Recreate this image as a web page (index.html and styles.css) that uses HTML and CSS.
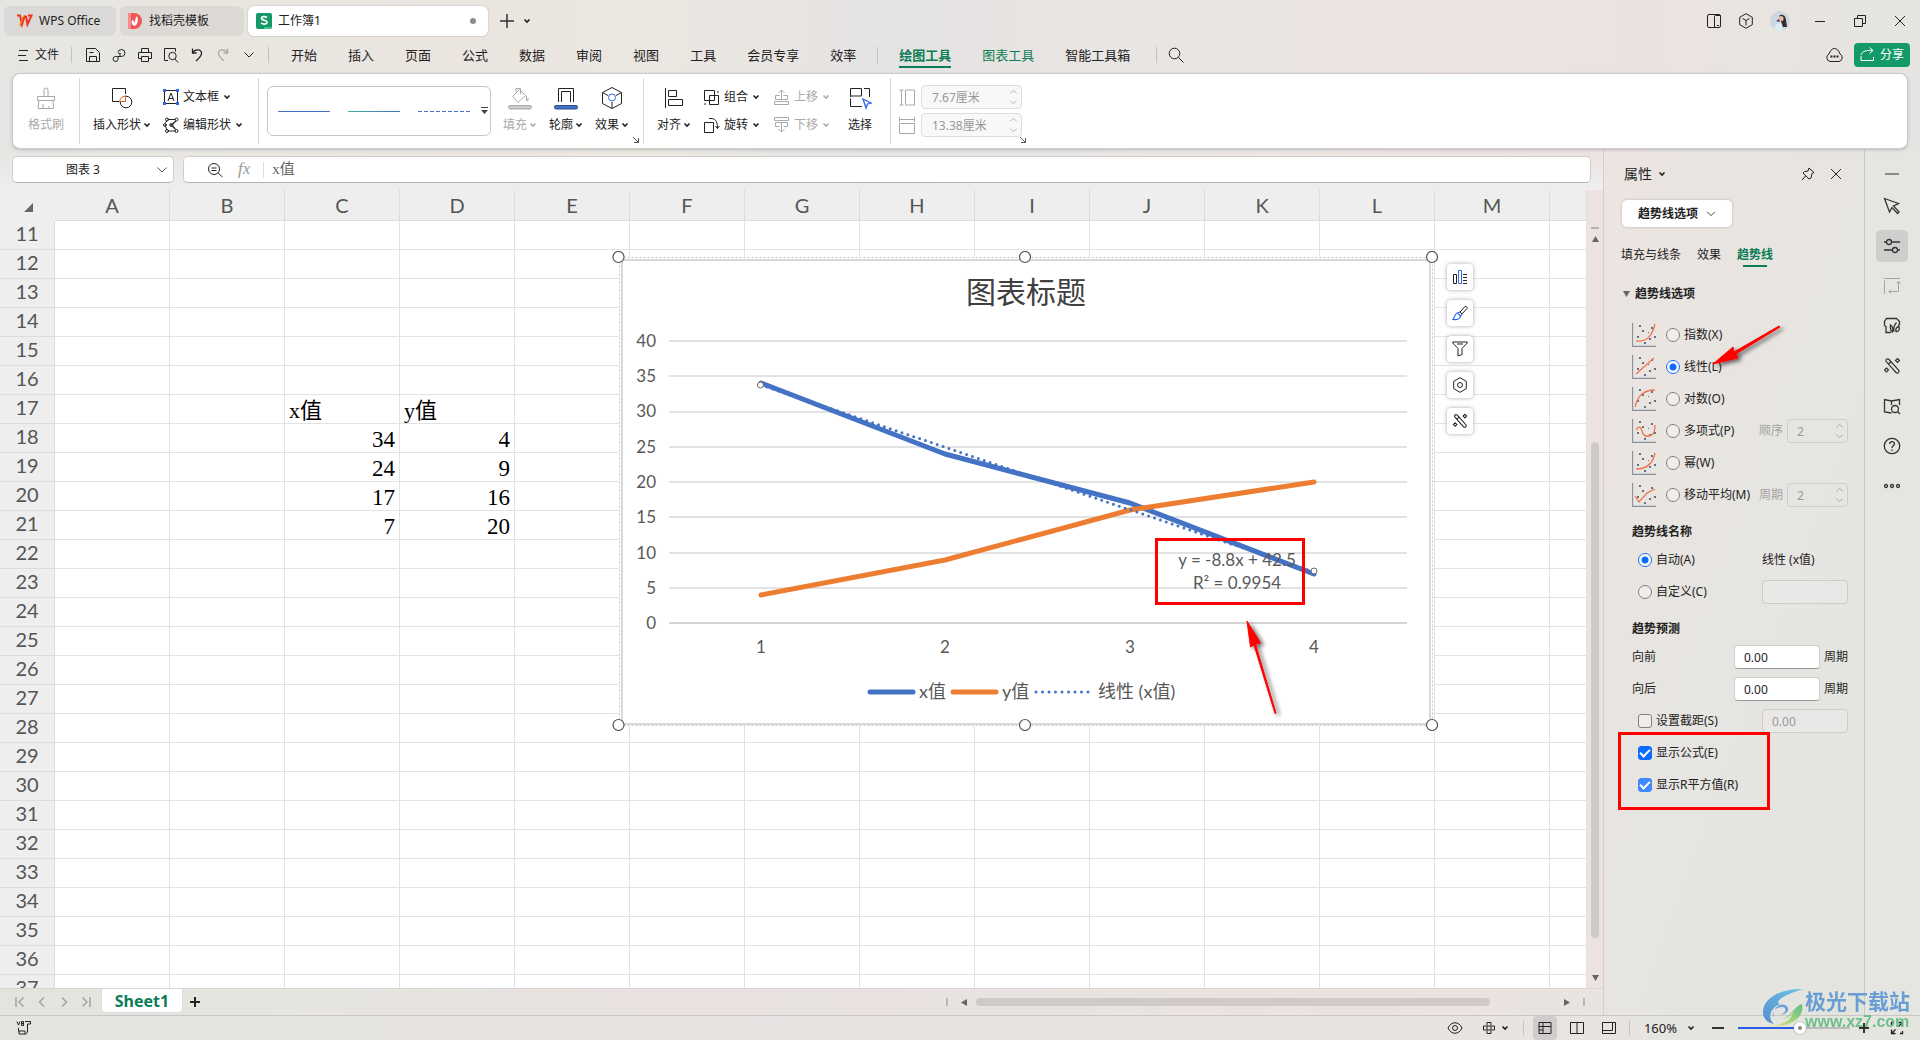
FILE: index.html
```html
<!DOCTYPE html>
<html lang="zh-CN">
<head>
<meta charset="utf-8">
<title>工作簿1 - WPS Office</title>
<link rel="stylesheet" href="styles.css">
</head>
<body>
<svg class="defs" width="0" height="0" aria-hidden="true">
  <symbol id="caret" viewBox="0 0 8 8"><path d="M1.500 2.500 4 5l2.500-2.500" fill="none" stroke="currentColor" stroke-width="1.600"/></symbol>
  <symbol id="chev" viewBox="0 0 12 12"><path d="M1.500 3.500 6 8l4.500-4.500" fill="none" stroke="currentColor"/></symbol>
  <symbol id="updown" viewBox="0 0 10 20"><path d="M1.500 6 5 2.500 8.500 6M1.500 14 5 17.500 8.500 14" fill="none" stroke="currentColor"/></symbol>
  <symbol id="close" viewBox="0 0 12 12"><path d="m1 1 10 10M11 1 1 11" fill="none" stroke="currentColor"/></symbol>
  <symbol id="launch" viewBox="0 0 8 8"><path d="m1 1 5 5M6.500 2v4.500H2" fill="none" stroke="currentColor"/></symbol>
  <symbol id="wand" viewBox="0 0 18 18"><g fill="none" stroke="currentColor" stroke-width="1.200"><path d="M3.300 4.700 13 15.500a1.700 1.700 0 0 0 2.600-2.300L6 2.500a1.700 1.700 0 0 0-2.700 2.200zM5.500 7 8 4.700"/><path d="m14.500 1.500 2 2-2 2-2-2zM3.500 11l2 2-2 2-2-2z"/></g></symbol>
</svg>

<header class="titlebar">
  <div class="tabs">
    <button class="tab tab-home"><svg width="17" height="14" viewBox="0 0 17 14"><path d="M1 1.500h3l2 9 2.500-8h1.500l1.500 8L15.500 1.500H12" fill="none" stroke="#f0321e" stroke-width="2"/><path d="m4 12 3-9" stroke="#ff7a1a" stroke-width="1.500"/></svg>WPS Office</button>
    <button class="tab tab-docer"><svg width="14" height="16" viewBox="0 0 14 16"><path d="M0 0h6a8 8 0 0 1 0 16H0z" fill="#f25555"/><path d="M0 0h3v16H0z" fill="#f78d8d"/><path d="M7 13C3 12 3.500 9 4 7c1.500.5 2.500 1.500 3 3 0-2 0-5 2-7 1 2 2 7-2 10z" fill="#fff"/></svg>找稻壳模板</button>
    <button class="tab tab-book"><svg width="16" height="16" viewBox="0 0 16 16"><rect width="16" height="16" rx="2" fill="#159868"/><path d="M8 14h8v1a1 1 0 0 1-1 1H8z" fill="#3fc48c"/><path d="M11 4.500C9 3 5.500 3.300 5.500 5.300c0 2.600 5.500 1.300 5.500 4 0 2-3.500 2.300-6 .7" fill="none" stroke="#fff" stroke-width="1.700"/></svg>工作簿1<i class="dot"></i></button>
    <button class="plain add" aria-label="新建"><svg width="14" height="14"><path d="M7 0v14M0 7h14" stroke="#333" stroke-width="1.500"/></svg></button>
    <button class="plain" aria-label="标签列表"><svg width="8" height="8"><use href="#caret"/></svg></button>
  </div>
  <div class="win">
    <button class="plain" aria-label="侧栏"><svg width="16" height="16" class="ln"><rect x="1.500" y="1.500" width="13" height="13" rx="1.500"/><path d="M8.500 14.500v-11a1 1 0 0 1 1-1h5M11 12.500h2"/></svg></button>
    <button class="plain" aria-label="工具"><svg width="16" height="16" class="ln"><path d="m8 .7 6.300 3.600v7.400L8 15.300 1.700 11.700V4.300zM4.500 5.500 8 7.500l3.500-2M8 7.500v5"/></svg></button>
    <button class="plain" aria-label="账号"><svg width="20" height="20"><defs><clipPath id="av"><circle cx="10" cy="10" r="10"/></clipPath></defs><g clip-path="url(#av)"><rect width="20" height="20" fill="#cbd8e2"/><path d="M9 5c3-3 7 0 7 4l1 7h-4z" fill="#3a2a30"/><circle cx="11" cy="7.500" r="2.600" fill="#e3b8a8"/><path d="M4 20c0-6 3-8 7-8l2 8z" fill="#dcecf5"/><path d="M6 10l3-2 1 3z" fill="#54424a"/></g></svg></button>
    <button class="plain" aria-label="最小化"><svg width="12" height="12" class="ln"><path d="M1 6.500h10"/></svg></button>
    <button class="plain" aria-label="还原"><svg width="14" height="14" class="ln"><path d="M1.500 4.500h8v8h-8zM4.500 4V1.500h8v8H10"/></svg></button>
    <button class="plain" aria-label="关闭"><svg width="12" height="12"><use href="#close"/></svg></button>
  </div>
</header>

<nav class="menubar">
  <button class="plain file"><svg width="10" height="12" class="ln"><path d="M1 1.500h9M0 6.500h8M1 11.500h9"/></svg>文件</button>
  <i class="vline"></i>
  <div class="quick">
    <button class="plain" aria-label="保存"><svg width="16" height="16" class="ln"><path d="M1.500 1.500h9l4 4v9h-13zM4.500 14.500v-5h7v5M4.500 5.500h4"/></svg></button>
    <button class="plain" aria-label="输出"><svg width="16" height="16" class="ln"><path d="M6.500 9.500h4a3.500 3.500 0 1 0-3.500-4M7.500 6.500h2M9 6v3.500M6.500 9.500H4.500a2.500 2.500 0 1 0 2.500 3V9.500"/></svg></button>
    <button class="plain" aria-label="打印"><svg width="16" height="16" class="ln"><path d="M4.500 5V1.500h7V5M4 11.500H1.500v-6h13v6H12M4.500 9.500h7v5h-7z"/></svg></button>
    <button class="plain" aria-label="打印预览"><svg width="16" height="16" class="ln"><path d="M5 13.500H1.500v-12h11v3"/><circle cx="9.500" cy="9" r="3.700"/><path d="m12 12 3 3.500"/></svg></button>
    <button class="plain" aria-label="撤销"><svg width="16" height="16" class="ln"><path d="M3.500 1.500v4.500h4M3.500 6C6 1.500 13 2 12.500 6.500c-.2 3-3 5-5.500 7.500" stroke-width="1.300"/></svg></button>
    <button class="plain off" aria-label="恢复"><svg width="16" height="16" class="ln"><path d="M12.500 1.500v4.500h-4M12.500 6C10 1.500 3 2 3.500 6.500c.2 3 3 5 5.500 7.500" stroke-width="1.300"/></svg></button>
    <button class="plain" aria-label="更多"><svg width="12" height="12"><use href="#chev"/></svg></button>
  </div>
  <i class="vline"></i>
  <div class="menus">
    <button class="plain">开始</button><button class="plain">插入</button><button class="plain">页面</button><button class="plain">公式</button><button class="plain">数据</button><button class="plain">审阅</button><button class="plain">视图</button><button class="plain">工具</button><button class="plain">会员专享</button><button class="plain">效率</button>
  </div>
  <i class="vline"></i>
  <div class="menus ctx">
    <button class="plain active">绘图工具</button><button class="plain green">图表工具</button><button class="plain">智能工具箱</button>
  </div>
  <i class="vline"></i>
  <button class="plain search" aria-label="搜索"><svg width="16" height="16" class="ln"><circle cx="6.500" cy="6.500" r="5.300"/><path d="m10.500 10.500 5 5"/></svg></button>
  <div class="share-box">
    <button class="plain" aria-label="云端状态"><svg width="17" height="16" class="ln"><path d="M4 14.500a4 4 0 0 1-1-7.500c1-3 3-5.500 5.500-5.500S13 4 14 7a4 4 0 0 1-1 7.500z"/><path d="M4.500 9.500h2m1 0h2m1 0h2" stroke-width="1.800"/></svg></button>
    <button class="share"><svg width="15" height="15" class="ln"><path d="M1 9v4.500h12.500V10M1 8c1-4 6-5 11.500-4.500M9.500.5l3.500 3-3.500 3"/></svg>分享</button>
  </div>
</nav>

<section class="ribbon">
  <div class="rgroup g-brush">
    <button class="big off"><svg width="24" height="26" class="ln"><path d="M3.500 11.500h17v4h-17zM5 15.500l-1 8h15.500l-.5-8M10 11.500V5a2 2 0 1 1 4 0v6.500M9 23v-4M15 23v-2"/></svg><span>格式刷</span></button>
  </div>
  <div class="rgroup g-insert">
    <button class="big"><svg width="24" height="26" class="ln"><path d="M9 16.500H2.500v-13h13V9"/><circle cx="16" cy="17" r="5.800"/><path d="M9.700 16.500A6.500 6 0 0 1 15.500 11v5.500z" stroke="#d9602b" fill="#fff"/></svg><span>插入形状<svg width="8" height="8"><use href="#caret"/></svg></span></button>
    <div class="stack">
      <button class="small"><svg width="16" height="16" class="ln"><path d="M1.500 3v10M14.500 3v10M3 1.500h10M3 14.500h10M5 12l3-8 3 8M6 9.500h4"/><path d="M0 0h3v3H0zM13 0h3v3h-3zM0 13h3v3H0zM13 13h3v3h-3z" fill="#2f66e8" stroke="none"/></svg>文本框<svg width="8" height="8"><use href="#caret"/></svg></button>
      <button class="small"><svg width="16" height="16" class="ln"><path d="M4.500 2.500h8M2 6.500 4 3.500M4 7.500l-2 .5 2 5M4.500 14h8M13 4 9.500 8l3.500 5M12 4.500 7.500 8 12 12"/><circle cx="4" cy="2.500" r="1.500"/><circle cx="13.500" cy="2.500" r="1.500"/><circle cx="1.800" cy="8" r="1.300"/><circle cx="8" cy="8" r="1.300"/><circle cx="4" cy="14" r="1.500"/><circle cx="13.500" cy="14" r="1.500"/></svg>编辑形状<svg width="8" height="8"><use href="#caret"/></svg></button>
    </div>
  </div>
  <div class="rgroup g-style">
    <div class="gallery">
      <button class="plain line-a" aria-label="线条样式1"></button><button class="plain line-b" aria-label="线条样式2"></button><button class="plain line-c" aria-label="线条样式3"></button>
      <button class="plain more" aria-label="更多样式"><svg width="8" height="8"><path d="M0 .5h7" stroke="#444"/><path d="M0 3h7L3.500 7z" fill="#444"/></svg></button>
    </div>
    <button class="big off"><svg width="26" height="26" class="ln"><path d="m6 11 6.500-6.500 6 6L11 17.500 6 12zM9 7V3.500h4.500V9M19.500 11v4.500h1.500V13"/><rect x="1.500" y="20.500" width="23" height="3.500" rx="1.500" fill="#ccc"/></svg><span>填充<svg width="8" height="8"><use href="#caret"/></svg></span></button>
    <button class="big"><svg width="26" height="26" class="ln"><path d="M5.500 17V3.500h15V17M8.500 17V6.500h9V17"/><rect x="1.500" y="20.500" width="23" height="3.500" rx="1.500" fill="#4472c4" stroke="#2b4f94"/></svg><span>轮廓<svg width="8" height="8"><use href="#caret"/></svg></span></button>
    <button class="big"><svg width="24" height="26" class="ln"><path d="m12 2.500 9.500 5v11L12 23.500l-9.500-5v-11zM12 17v6.500M2.500 7.500 8 10.500M21.500 7.500 16 10.500"/><circle cx="12" cy="12.500" r="3.500" stroke="#2f66e8"/></svg><span>效果<svg width="8" height="8"><use href="#caret"/></svg></span></button>
    <button class="plain launcher" aria-label="样式设置"><svg width="8" height="8"><use href="#launch"/></svg></button>
  </div>
  <div class="rgroup g-arrange">
    <button class="big"><svg width="22" height="26" class="ln"><path d="M2.500 3v20M5.500 5.500h8v6h-8zM5.500 14.500h14v6h-14z"/></svg><span>对齐<svg width="8" height="8"><use href="#caret"/></svg></span></button>
    <div class="stack">
      <button class="small"><svg width="17" height="17" class="ln"><path d="M1.500 1.500h10v10h-10zM6.500 6.500h9v9h-9zM14 3h2M1 15h2"/></svg>组合<svg width="8" height="8"><use href="#caret"/></svg></button>
      <button class="small"><svg width="17" height="17" class="ln"><path d="M1.500 5.500h9v10h-9zM6 1.500c6-.5 8.500 2 8.500 10M12.500 9l2 2.500 2-2.500"/></svg>旋转<svg width="8" height="8"><use href="#caret"/></svg></button>
    </div>
    <div class="stack">
      <button class="small off"><svg width="16" height="16" class="ln"><path d="M7.500 10V1M4.500 4l3-3 3 3M5.500 6.500h-4v4h12v-4h-4M.5 12.500h14v3H.5z"/></svg>上移<svg width="8" height="8"><use href="#caret"/></svg></button>
      <button class="small off"><svg width="16" height="16" class="ln"><path d="M7.500 6v9M4.500 12l3 3 3-3M5.500 9.500h-4v-4h12v4h-4M.5.500h14v3H.5z"/></svg>下移<svg width="8" height="8"><use href="#caret"/></svg></button>
    </div>
    <button class="big"><svg width="24" height="26" class="ln"><path d="M2.500 12V3.500h11V11H2.500M16 3.500h5.500V12M2.500 13.500v8H14"/><path d="m15 14 8 4-3.500 1-1.500 4z" stroke="#2f66e8" stroke-width="1.300"/></svg><span>选择</span></button>
  </div>
  <div class="rgroup g-size">
    <div class="stack">
      <label class="dim"><svg width="16" height="17" class="ln"><path d="M2.500 1v15M.500 1h4M.500 16h4M6.500 1h9v15h-9z"/></svg><span class="num"><input value="7.67厘米" aria-label="高度" disabled><svg width="9" height="18"><use href="#updown"/></svg></span></label>
      <label class="dim"><svg width="16" height="17" class="ln"><path d="M0 2.500h16M.500 0v5M15.500 0v5M.500 6.500h15v10H.500z"/></svg><span class="num"><input value="13.38厘米" aria-label="宽度" disabled><svg width="9" height="18"><use href="#updown"/></svg></span></label>
    </div>
    <button class="plain launcher" aria-label="大小设置"><svg width="8" height="8"><use href="#launch"/></svg></button>
  </div>
</section>

<div class="body">
<main class="work">
  <div class="formula-row">
    <div class="namebox"><select aria-label="名称框"><option>图表 3</option></select><svg width="12" height="12"><use href="#chev"/></svg></div>
    <div class="formula">
      <svg width="16" height="16" class="ln"><circle cx="7" cy="7" r="5.500"/><path d="m11 11 4.500 4M4.500 6h5M4.500 8.500h5"/></svg>
      <span class="fx">fx</span>
      <input value="x值" aria-label="编辑栏">
    </div>
  </div>
  <div class="canvas">
    <div class="sheet">
      <table>
        <colgroup><col class="c0"><col class="c"><col class="c"><col class="c"><col class="c"><col class="c"><col class="c"><col class="c"><col class="c"><col class="c"><col class="c"><col class="c"><col class="c"><col class="c"><col></colgroup>
        <thead><tr><th><svg width="9" height="9"><path d="M0 9 9 0v9z" fill="#666"/></svg></th><th>A</th><th>B</th><th>C</th><th>D</th><th>E</th><th>F</th><th>G</th><th>H</th><th>I</th><th>J</th><th>K</th><th>L</th><th>M</th><th></th></tr></thead>
        <tbody>
        <tr><th>11<td><td><td><td><td><td><td><td><td><td><td><td><td><td>
        <tr><th>12<td><td><td><td><td><td><td><td><td><td><td><td><td><td>
        <tr><th>13<td><td><td><td><td><td><td><td><td><td><td><td><td><td>
        <tr><th>14<td><td><td><td><td><td><td><td><td><td><td><td><td><td>
        <tr><th>15<td><td><td><td><td><td><td><td><td><td><td><td><td><td>
        <tr><th>16<td><td><td><td><td><td><td><td><td><td><td><td><td><td>
        <tr><th>17<td><td><td class="txt">x值<td class="txt">y值<td><td><td><td><td><td><td><td><td><td>
        <tr><th>18<td><td><td>34<td>4<td><td><td><td><td><td><td><td><td><td>
        <tr><th>19<td><td><td>24<td>9<td><td><td><td><td><td><td><td><td><td>
        <tr><th>20<td><td><td>17<td>16<td><td><td><td><td><td><td><td><td><td>
        <tr><th>21<td><td><td>7<td>20<td><td><td><td><td><td><td><td><td><td>
        <tr><th>22<td><td><td><td><td><td><td><td><td><td><td><td><td><td>
        <tr><th>23<td><td><td><td><td><td><td><td><td><td><td><td><td><td>
        <tr><th>24<td><td><td><td><td><td><td><td><td><td><td><td><td><td>
        <tr><th>25<td><td><td><td><td><td><td><td><td><td><td><td><td><td>
        <tr><th>26<td><td><td><td><td><td><td><td><td><td><td><td><td><td>
        <tr><th>27<td><td><td><td><td><td><td><td><td><td><td><td><td><td>
        <tr><th>28<td><td><td><td><td><td><td><td><td><td><td><td><td><td>
        <tr><th>29<td><td><td><td><td><td><td><td><td><td><td><td><td><td>
        <tr><th>30<td><td><td><td><td><td><td><td><td><td><td><td><td><td>
        <tr><th>31<td><td><td><td><td><td><td><td><td><td><td><td><td><td>
        <tr><th>32<td><td><td><td><td><td><td><td><td><td><td><td><td><td>
        <tr><th>33<td><td><td><td><td><td><td><td><td><td><td><td><td><td>
        <tr><th>34<td><td><td><td><td><td><td><td><td><td><td><td><td><td>
        <tr><th>35<td><td><td><td><td><td><td><td><td><td><td><td><td><td>
        <tr><th>36<td><td><td><td><td><td><td><td><td><td><td><td><td><td>
        <tr><th>37<td><td><td><td><td><td><td><td><td><td><td><td><td><td>
        </tbody>
      </table>
      <svg class="chart" width="826" height="480" viewBox="612 252 826 480" role="img" aria-label="图表标题">
        <defs><filter id="sh" x="-50%" y="-50%" width="200%" height="200%"><feDropShadow dx="3" dy="2" stdDeviation="2" flood-color="#000" flood-opacity=".6"/></filter></defs>
        <rect x="619" y="258" width="814" height="469" fill="#fff"/>
        <rect x="619.500" y="258.500" width="813" height="468" fill="none" stroke="#c9c9c9" stroke-dasharray="2 2"/>
        <rect x="622" y="261" width="808" height="464" fill="#fff" stroke="#d9d9d9" stroke-width="2"/>
        <text class="ctitle" x="1026" y="304" text-anchor="middle">图表标题</text>
        <path d="M669 342h738M669 377h738M669 413h738M669 448h738M669 483h738M669 518h738M669 554h738M669 589h738" stroke="#e2e2e2" stroke-width="2"/>
        <path d="M669 624h738" stroke="#d5d5d5" stroke-width="2"/>
        <g text-anchor="end"><text x="656" y="348">40</text><text x="656" y="383">35</text><text x="656" y="418">30</text><text x="656" y="454">25</text><text x="656" y="489">20</text><text x="656" y="524">15</text><text x="656" y="560">10</text><text x="656" y="595">5</text><text x="656" y="630">0</text></g>
        <g text-anchor="middle"><text x="761" y="654">1</text><text x="945" y="654">2</text><text x="1130" y="654">3</text><text x="1314" y="654">4</text></g>
        <g fill="none" stroke-width="5" stroke-linecap="round" stroke-linejoin="round">
          <path d="m761 384 184 71 185 49 184 71" stroke="#4472c4"/>
          <path d="m761 596 184-35 185-50 184-28" stroke="#ed7d31"/>
          <path d="m761 386 553 187" stroke="#4472c4" stroke-width="3" stroke-dasharray="0 6.200"/>
          <path d="M870 693h43" stroke="#4472c4"/><path d="M953 693h43" stroke="#ed7d31"/>
          <path d="M1036 693h54" stroke="#4472c4" stroke-width="3" stroke-dasharray="0 6.500"/>
        </g>
        <g fill="#fff" stroke="#666"><circle cx="760.500" cy="386" r="3"/><circle cx="1314" cy="572" r="3"/></g>
        <text class="leg" x="919" y="699">x值</text><text class="leg" x="1002" y="699">y值</text><text class="leg" x="1098" y="699">线性 (x值)</text>
        <g text-anchor="middle"><text x="1237" y="567">y = -8.8x + 42.5</text><text x="1237" y="590">R² = 0.9954</text></g>
        <g fill="#fff" stroke="#555" stroke-width="1.200"><circle cx="618.500" cy="258" r="5.500"/><circle cx="1025" cy="258" r="5.500"/><circle cx="1432" cy="258" r="5.500"/><circle cx="618.500" cy="726" r="5.500"/><circle cx="1025" cy="726" r="5.500"/><circle cx="1432" cy="726" r="5.500"/></g>
        <rect x="1156.500" y="540.500" width="147" height="64" fill="none" stroke="#f00" stroke-width="3"/>
        <path d="M1247 622l13.500 22-5 1 20.500 69-1 .5-21-68.500-3.500 2z" fill="#f00" stroke="#f00" stroke-linejoin="round" filter="url(#sh)"/>
      </svg>
      <div class="chart-tools">
        <button aria-label="图表元素"><svg width="16" height="16" class="ln"><path d="M1.500 5.500h3v9h-3zM11 5.500h4M11 8.500h4M11 11.500h4M11 14.500h4"/><path d="M6.500 1.500h3v13h-3z" stroke="#2f66e8"/></svg></button>
        <button aria-label="图表样式"><svg width="16" height="16" class="ln"><path d="m8 7 5-5.500a1.500 1.500 0 0 1 2 2L10 9z"/><path d="M8 7 5.500 8 8.500 11l1.500-2M5.500 8c-3 .5-2.500 4-4.500 6.500 4 .5 7-.5 7.500-3.500" stroke="#2f66e8" stroke-width="1.200"/></svg></button>
        <button aria-label="图表筛选器"><svg width="16" height="16" class="ln"><path d="M.800 1h14.400v1L10 7.500v6L6 15V7.500L.800 2zM5 3h6"/></svg></button>
        <button aria-label="设置"><svg width="16" height="16" class="ln"><path d="m8 .7 6.300 3.600v7.400L8 15.300 1.700 11.700V4.300z"/><circle cx="8" cy="8" r="2.500"/></svg></button>
        <button aria-label="智能图表"><svg width="16" height="16"><use href="#wand"/></svg></button>
      </div>
    </div>
    <div class="vscroll"><i class="dash"></i><svg width="7" height="6"><path d="M0 6h7L3.500 0z" fill="#666"/></svg><div class="track"><div class="thumb"></div></div><svg width="7" height="6"><path d="M0 0h7L3.500 6z" fill="#666"/></svg></div>
  </div>
  <div class="sheetbar">
    <div class="nav">
      <button class="plain" aria-label="首个"><svg width="10" height="12"><path d="M1 1v10M8.500 1.500 4 6l4.500 4.500"/></svg></button>
      <button class="plain" aria-label="上一个"><svg width="10" height="12"><path d="M7 1.500 2.500 6 7 10.500"/></svg></button>
      <button class="plain" aria-label="下一个"><svg width="10" height="12"><path d="M3 1.500 7.500 6 3 10.500"/></svg></button>
      <button class="plain" aria-label="末个"><svg width="10" height="12"><path d="M9 1v10M1.500 1.500 6 6l-4.500 4.500"/></svg></button>
    </div>
    <button class="sheet-tab">Sheet1</button>
    <button class="plain plus" aria-label="新建工作表"><svg width="10" height="10"><path d="M5 0v10M0 5h10" stroke="#222" stroke-width="2"/></svg></button>
    <div class="hscroll"><i></i><svg width="6" height="7"><path d="M6 0v7L0 3.500z" fill="#666"/></svg><div class="track"><div class="thumb"></div></div><svg width="6" height="7"><path d="M0 0v7l6-3.500z" fill="#666"/></svg><i></i></div>
  </div>
</main>

<aside class="panel">
  <div class="phead"><button class="plain ptitle">属性<svg width="8" height="8"><use href="#caret"/></svg></button><button class="plain" aria-label="固定"><svg width="14" height="14" class="ln"><path d="m8 1 5 4.500-2 1-1 4.500-2 1-6-6 1.500-1.500L7 4zM4.500 9 1 13"/></svg></button><button class="plain" aria-label="关闭面板"><svg width="12" height="12"><use href="#close"/></svg></button></div>
  <button class="pick">趋势线选项<svg width="10" height="10"><use href="#chev"/></svg></button>
  <div class="ptabs"><button class="plain">填充与线条</button><button class="plain">效果</button><button class="plain on">趋势线</button></div>
  <h3 class="sec"><svg width="7" height="6"><path d="M0 0h7L3.500 6z" fill="#666"/></svg>趋势线选项</h3>
  <div class="types">
    <div class="row"><svg class="tr" width="24" height="24"><use href="#tdots"/><path d="M4 18c11 1 16-5 19-17"/></svg><label><input type="radio" name="type">指数(X)</label></div>
    <div class="row"><svg class="tr" width="24" height="24"><use href="#tdots"/><path d="M4 19 22 3"/></svg><label><input type="radio" name="type" checked>线性(L)</label></div>
    <div class="row"><svg class="tr" width="24" height="24"><use href="#tdots"/><path d="M3 20C6 8 12 3 23 3"/></svg><label><input type="radio" name="type">对数(O)</label></div>
    <div class="row"><svg class="tr" width="24" height="24"><use href="#tdots"/><path d="M4 11c2-4 5-4 6 1 1 4 3 6 7 5s6-3 6-11"/></svg><label><input type="radio" name="type">多项式(P)</label><label class="spin">顺序<span class="num"><input value="2" disabled><svg width="9" height="18"><use href="#updown"/></svg></span></label></div>
    <div class="row"><svg class="tr" width="24" height="24"><use href="#tdots"/><path d="M4 18c11 0 17-6 19-16"/></svg><label><input type="radio" name="type">幂(W)</label></div>
    <div class="row"><svg class="tr" width="24" height="24"><use href="#tdots"/><path d="m3 13 4 6 8-9 8-4"/></svg><label><input type="radio" name="type">移动平均(M)</label><label class="spin">周期<span class="num"><input value="2" disabled><svg width="9" height="18"><use href="#updown"/></svg></span></label></div>
  </div>
  <h3 class="sub">趋势线名称</h3>
  <div class="row in"><label><input type="radio" name="nm" checked>自动(A)</label><span class="auto">线性 (x值)</span></div>
  <div class="row in"><label><input type="radio" name="nm">自定义(C)</label><input class="field end" aria-label="自定义名称" disabled></div>
  <h3 class="sub">趋势预测</h3>
  <div class="row"><label class="cast">向前<input class="field" value="0.00"></label>周期</div>
  <div class="row"><label class="cast">向后<input class="field" value="0.00"></label>周期</div>
  <div class="row in"><label><input type="checkbox">设置截距(S)</label><input class="field end" value="0.00" aria-label="截距" disabled></div>
  <div class="row in"><label><input type="checkbox" checked>显示公式(E)</label></div>
  <div class="row in"><label><input type="checkbox" class="hover" checked>显示R平方值(R)</label></div>
  <svg class="defs" width="0" height="0"><symbol id="tdots" viewBox="0 0 24 24"><path d="M.5 0v23.500H24" fill="none" stroke="#8a93a3"/><path d="M7 2h2v2H7zM19 4h2v2h-2zM10 7h2v2h-2zM16 9h1v1h-1zM5 13h2v2H5zM17 15h2v2h-2zM22 13h2v2h-2zM12 19h2v2h-2z" fill="#66707f" stroke="none"/></symbol></svg>
  <div class="mark"></div>
  <svg class="arrow" width="90" height="60" viewBox="1706 316 90 60"><path d="M1714 364l20-17 1 5 45-26 1 1-44 27 2 4z" fill="#f00" stroke="#f00" stroke-linejoin="round" filter="url(#sh)"/></svg>
</aside>

<aside class="rail">
  <button class="plain fold" aria-label="收起"><svg width="14" height="4"><path d="M0 2h14" stroke="#8c8c8c" stroke-width="2"/></svg></button>
  <button class="plain" aria-label="选择"><svg width="18" height="18" class="ln w"><path d="m1.500 1.500 14 5-5 2.500 5.500 6-1.500 1.500L9 10.500 6.500 15z"/></svg></button>
  <button class="plain cur" aria-label="属性"><svg width="18" height="18" class="ln w"><path d="M1 5h3M8 5h9M1 13h9M14 13h3"/><circle cx="6" cy="5" r="2.500"/><circle cx="12" cy="13" r="2.500"/></svg></button>
  <button class="plain off" aria-label="变换"><svg width="18" height="18" class="ln"><path d="M3 1.500h14M1.500 3.500V17M6 14.500h9.500V5M13.500 6.500l2-2 2 2M8 12.500l-2 2 2 2M.500 1.500h2"/></svg></button>
  <button class="plain" aria-label="分析"><svg width="18" height="18" class="ln w"><path d="M8 15.500H3V9.500L1.500 8.500v-4l2-3h10l3 3v3l-1.500 1M9.500 15c-2-1.500-2.500-4-2-7 2 1.500 3 4 2 7zM13.500 5.500c-2.500 2.500-3 6-2.500 9M16 9.500c-2.500.5-3.500 2.500-3 5 2.500.5 4-1.500 3-5z"/></svg></button>
  <button class="plain" aria-label="智能工具"><svg width="18" height="18"><use href="#wand"/></svg></button>
  <button class="plain" aria-label="查找"><svg width="18" height="18" class="ln w"><path d="M8.500 16 1.500 15V2.500l7 1.500 8-1.500V8M8.500 4v4"/><circle cx="12" cy="12" r="3.500"/><path d="m14.500 14.500 2.500 2.500"/></svg></button>
  <button class="plain" aria-label="帮助"><svg width="18" height="18" class="ln w"><circle cx="9" cy="9" r="7.700"/><path d="M6.700 7c0-3 4.800-3 4.800-.3C11.500 8.500 9 8.700 9 11M9 12.500V14"/></svg></button>
  <button class="plain" aria-label="更多"><svg width="18" height="6" class="ln w"><circle cx="3" cy="3" r="1.500"/><circle cx="9" cy="3" r="1.500"/><circle cx="15" cy="3" r="1.500"/></svg></button>
</aside>
</div>

<footer class="status">
  <button class="plain macro" aria-label="宏"><svg width="16" height="16" class="ln"><path d="M1 1.500 2.500 5 4 1.500M5.500 1.500v4h2v-4zM5.500 3.500h2M9 1.500h5.500V4h-3v8.500M2.500 8v3H9v3H3v-3M11.500 12.500 9 14.500"/></svg></button>
  <div class="sright">
    <button class="plain" aria-label="护眼"><svg width="16" height="14" class="ln"><path d="M1 7c3-7 11-7 14 0-3 7-11 7-14 0z"/><circle cx="8" cy="7" r="2.500"/></svg></button>
    <button class="plain aim" aria-label="聚光灯"><svg width="14" height="14" class="ln"><path d="M5 4.500V1.500h4v3M5 9.500v3h4v-3M4.500 5h-3v4h3M9.500 5h3v4h-3M5 5h4v4H5z"/></svg><svg width="8" height="8"><use href="#caret"/></svg></button>
    <i></i>
    <button class="plain view" aria-label="普通视图"><svg width="14" height="14" class="ln"><path d="M1 1.500h12v11H1zM1 5.500h12M5 1.500v11M1 9h4"/></svg></button>
    <button class="plain page" aria-label="分页预览"><svg width="14" height="14" class="ln"><path d="M.500 1.500h13v11H.500zM7 1.500v11"/></svg></button>
    <button class="plain page" aria-label="阅读"><svg width="14" height="14" class="ln"><path d="M.500 1.500h10v8H.500zM.500 9.500v3h13v-11H10.500"/></svg></button>
    <i></i>
    <button class="plain zoom">160%<svg width="8" height="8"><use href="#caret"/></svg></button>
    <button class="plain minus" aria-label="缩小"><svg width="12" height="10"><path d="M0 5h12" stroke="#333" stroke-width="2"/></svg></button>
    <input type="range" min="0" max="100" value="56" aria-label="缩放">
    <button class="plain" aria-label="放大"><svg width="10" height="10"><path d="M0 5h10M5 0v10" stroke="#333" stroke-width="2"/></svg></button>
    <button class="plain full" aria-label="全屏"><svg width="14" height="14" class="ln w"><path d="M8.500 1.500h4v4M12 2 8.500 5.500M5.500 12.500h-4v-4M2 12l3.500-3.500M1.500 4V1.500H4M12.500 10v2.500H10"/></svg></button>
  </div>
</footer>

<div class="brand">
  <svg width="42" height="40" viewBox="0 0 42 40"><defs><linearGradient id="b1" x1="1" y1="0" x2="0" y2="1"><stop offset="0" stop-color="#5cc0e8"/><stop offset="1" stop-color="#4a86cf"/></linearGradient><linearGradient id="b2" x1="1" y1="0" x2="0" y2="1"><stop offset="0" stop-color="#4dba7c"/><stop offset="1" stop-color="#e4ea6a"/></linearGradient></defs><path d="M41 1C22 0 1 9 1 24c0 7 5 11 11 12-8-7-2-17 6-20-4-1-3-7 23-15z" fill="url(#b1)"/><path d="M40 16c3 14-12 24-34 22 14 0 24-6 25-14-2 4-7 7-11 7 10-3 11-12 20-15z" fill="url(#b2)"/><path d="M12 30c-3-6 3-12 9-11 4 1 3 7-3 7 5 1 9-2 8-6-2-6-16-5-14 10z" fill="#5d98d6"/></svg>
  <div><strong>极光下载站</strong><span>www.xz7.com</span></div>
</div>
</body>
</html>
```
FILE: styles.css
```css
* { box-sizing: border-box; }

body {
  margin: 0;
  height: 100vh;
  display: flex;
  flex-direction: column;
  overflow: hidden;
  position: relative;
  font: 12px/16px "Noto Sans", "Noto Sans CJK SC", sans-serif;
  color: #222;
  background: linear-gradient(90deg, #e6e5e3 0, #e8e6e0 6%, #ebe5e0 26%, #ebe7e1 34%, #e5e3e3 46%, #ebe6e2 66%, #ede3e1 74%, #ece2e0 84%, #e9e5e0 92%, #e4e4e2 100%);
}

button, input, select { font: inherit; color: inherit; }
button { background: none; border: 0; padding: 0; display: flex; align-items: center; white-space: nowrap; }
svg { flex: none; display: block; }
i { display: block; flex: none; }
h3 { margin: 0; font-size: 12px; font-weight: 700; }
.defs { position: absolute; }
.ln { fill: none; stroke: currentColor; }
.ln.w { stroke-width: 1.300; }
.off { color: #a9a9a9; }

/* title bar */
.titlebar { height: 41px; display: flex; justify-content: space-between; padding: 0 14px 0 4px; flex: none; }
.tabs { display: flex; align-items: center; gap: 4px; }
.tab { height: 30px; border-radius: 6px; padding: 0 12px; gap: 6px; background: #dad9d7; }
.tab-home { width: 112px; }
.tab-docer { width: 124px; padding: 0 8px; gap: 7px; background: #dddad5; }
.tab-book { width: 240px; padding: 0 12px 0 8px; background: #fff; box-shadow: 0 0 2px #aaa; }
.dot { width: 6px; height: 6px; border-radius: 50%; background: #8c8c8c; margin-left: auto; }
.add { margin: 0 5px 0 8px; }
.win { display: flex; align-items: center; gap: 16px; }
.win button:nth-child(n+4) { margin-left: 8px; }
.win button:nth-child(n+5) { margin-left: 11px; }

/* menu bar */
.menubar { height: 32px; display: flex; align-items: center; padding: 0 10px 5px 18px; flex: none; font-size: 13px; }
.file { gap: 7px; font-size: 12px; }
.vline { width: 1px; height: 16px; background: #c4c2c0; }
.file + .vline { margin-left: 12px; }
.quick { display: flex; gap: 10px; margin: 0 11px 0 13px; }
.quick button { width: 16px; height: 16px; justify-content: center; }
.menus { display: flex; gap: 31px; padding: 0 21px 0 22px; align-self: stretch; }
.menus.ctx { padding: 0 26px 0 21px; }
.green { color: #0c7d55; }
.active { color: #0c7d55; font-weight: 700; border-bottom: 2px solid #0c7d55; border-top: 2px solid transparent; }
.search { margin-left: 11px; }
.share-box { margin-left: auto; display: flex; align-items: center; gap: 11px; }
.share { width: 56px; height: 24px; border-radius: 4px; background: #149a68; color: #fff; font-size: 12px; justify-content: center; gap: 5px; }

/* ribbon */
.ribbon { display: flex; align-items: stretch; height: 76px; margin: 0 12px; padding: 4px 0; background: #fff; border: 1px solid #cdcac8; border-radius: 8px; box-shadow: 0 1px 3px #bbb; flex: none; position: relative; z-index: 2; }
.rgroup { display: flex; align-items: center; border-right: 1px solid #d8d8d8; position: relative; }
.big { display: flex; flex-direction: column; gap: 2px; width: 46px; height: 52px; }
.big > svg { height: 26px; }
.big span { display: flex; align-items: center; gap: 2px; height: 24px; }
.stack { display: flex; flex-direction: column; gap: 4px; }
.small { height: 24px; gap: 4px; }
.g-brush { padding: 0 11px; width: 67px; }
.g-insert { width: 179px; padding-left: 13px; gap: 12px; }
.g-insert .big { width: 58px; }
.g-style { width: 385px; padding-left: 8px; }
.gallery { display: flex; align-items: center; gap: 18px; width: 224px; height: 50px; border: 1px solid #c6c6c6; border-radius: 6px; padding-left: 10px; margin-right: 6px; position: relative; }
.gallery .plain { width: 52px; height: 20px; }
.gallery .more { width: 8px; height: 8px; position: absolute; right: 1px; }
.line-a { background: linear-gradient(#4472c4, #4472c4) center / 100% 1px no-repeat; }
.line-b { background: linear-gradient(90deg, #3fae9e, #4472c4) center / 100% 1px no-repeat; }
.line-c { background: repeating-linear-gradient(90deg, #4472c4 0 4px, transparent 4px 6px) center / 100% 1px no-repeat; }
.launcher { position: absolute; right: 3px; bottom: 0; color: #555; }
.g-arrange { width: 247px; padding-left: 7px; }
.g-arrange .stack { width: 59px; margin-left: 6px; }
.g-arrange .stack + .stack { width: 58px; margin: 0 5px 0 12px; }
.g-size { width: 139px; padding-left: 8px; border: 0; }
.dim { display: flex; align-items: center; gap: 6px; color: #a9a9a9; }
.num { position: relative; display: block; }
.num input { width: 101px; height: 24px; border: 1px solid #dedede; border-radius: 4px; background: #f8f8f8; color: #999; padding: 0 10px; display: block; }
.num svg { position: absolute; right: 4px; top: 3px; }

/* layout under the ribbon */
.body { flex: 1; display: flex; min-height: 0; }
.work { flex: 1; min-width: 0; display: flex; flex-direction: column; }
.formula-row { display: flex; gap: 9px; padding: 7px 12px; background: linear-gradient(transparent, #eee); flex: none; }
.namebox, .formula { height: 27px; background: #fff; border: 1px solid #d0cecc; border-bottom-color: #b4b4b4; border-radius: 5px; }
.namebox { width: 162px; position: relative; }
.namebox select { appearance: none; width: 100%; height: 100%; border: 0; background: none; text-align-last: center; padding: 0 20px 0 0; }
.namebox svg { position: absolute; right: 5px; top: 7px; color: #555; }
.formula { flex: 1; display: flex; align-items: center; padding-left: 23px; }
.fx { font: italic 17px/14px "Liberation Serif", serif; color: #999; margin-left: 15px; padding-right: 13px; border-right: 1px solid #ddd; height: 16px; }
.formula input { flex: 1; border: 0; background: none; padding: 0 0 2px 8px; color: #666; font: 15px/18px "Liberation Serif", "Noto Sans CJK SC", serif; }

.canvas { flex: 1; display: flex; min-height: 0; border-bottom: 1px solid #d6d6d6; }
.sheet { flex: 1; min-width: 0; overflow: hidden; position: relative; background: #fff; }
table { border-collapse: separate; border-spacing: 0; table-layout: fixed; width: 100%; }
.c0 { width: 55px; }
.c { width: 115px; }
th { height: 29px; padding: 0 0 4px; background: #eee; border-right: 1px solid #dcdcdc; border-bottom: 1px solid #dcdcdc; font: 20px/24px Lato, sans-serif; color: #555; }
thead th { height: 31px; padding: 0; }
thead th:first-child { border-color: transparent; }
thead th svg { margin: 4px 0 0 24px; }
td { height: 29px; padding: 0 4px 0 2px; border-right: 1px solid #e2e2e2; border-bottom: 1px solid #e2e2e2; font: 23px/24px "Liberation Serif", "Noto Sans CJK SC", serif; color: #000; text-align: right; vertical-align: bottom; white-space: nowrap; }
.txt { text-align: left; padding-left: 4px; font-size: 22px; }

.chart { position: absolute; left: 612px; top: 61px; }
.chart text { font: 17px Lato, "Noto Sans CJK SC", sans-serif; fill: #595959; }
.chart .ctitle { font-size: 30px; fill: #404040; }
.chart .leg { font-size: 18px; }
.chart-tools { position: absolute; left: 1447px; top: 74px; display: flex; flex-direction: column; gap: 10px; }
.chart-tools button { width: 26px; height: 26px; justify-content: center; background: #fff; border-radius: 4px; box-shadow: 0 0 4px #aaa; }

.vscroll { width: 16px; display: flex; flex-direction: column; align-items: center; padding: 37px 0 7px; gap: 7px; }
.dash { width: 8px; height: 2px; background: #b5b1af; }
.track { flex: 1; display: flex; }
.vscroll .track { flex-direction: column; justify-content: flex-end; padding-bottom: 30px; width: 8px; }
.thumb { background: #cfcac8; border-radius: 4px; }
.vscroll .thumb { height: 72%; }

.sheetbar { height: 26px; display: flex; align-items: center; padding: 0 18px 0 15px; flex: none; background: linear-gradient(90deg, #e4e4df 0, #e6e5e0 20%, #e8e2df 35%, #e8e1e1 50%, #e9e4e0 70%, #ece2e0 80%, #e9e4e0); }
.nav { display: flex; gap: 12px; width: 86px; }
.nav svg { fill: none; stroke: #a5a3a0; stroke-width: 1.500; }
.sheet-tab { align-self: flex-start; width: 82px; height: 24px; justify-content: center; background: #fff; border: 1px solid #ddd; border-top: 0; border-radius: 0 0 5px 5px; color: #0c7d55; font-size: 16px; font-weight: 700; }
.plus { margin-left: 7px; }
.hscroll { margin-left: auto; width: 639px; display: flex; align-items: center; gap: 13px; }
.hscroll i { width: 2px; height: 8px; background: #bab6b4; }
.hscroll .thumb { width: 514px; height: 8px; }
.hscroll > svg:first-of-type { margin-right: -4px; }

/* property panel */
.panel { width: 262px; border-left: 1px solid #d2cfcd; border-right: 1px solid #c9c8c6; padding: 0 16px 0 17px; background: linear-gradient(110deg, #ece4e1, #e8e5e1 35%, #e6e5e1 60%, #e4e4df); position: relative; flex: none; }
.phead { display: flex; align-items: center; height: 50px; gap: 15px; }
.phead .ptitle { font-size: 14px; gap: 6px; margin-left: 3px; margin-right: auto; }
.phead button:last-child { margin-right: 6px; }
.pick { width: 112px; height: 29px; background: #fff; border: 1px solid #d8d4d2; border-radius: 6px; justify-content: center; gap: 8px; font-weight: 700; box-shadow: 0 0 2px #ccc; }
.ptabs { display: flex; gap: 16px; margin-top: 15px; }
.ptabs button { height: 24px; }
.ptabs .on { color: #0c7d55; font-weight: 700; background: linear-gradient(#0c7d55, #0c7d55) bottom / 24px 2px no-repeat; }
.sec { display: flex; align-items: center; gap: 5px; margin: 19px 0 17px 2px; }
.row { display: flex; align-items: center; height: 32px; padding-left: 11px; }
.row.in { padding-left: 17px; }
.row label { display: flex; align-items: center; gap: 4px; }
.tr { margin-right: 10px; fill: none; stroke: #f0764f; stroke-width: 1.300; }
.sub { margin: 13px 0 4px 11px; }
.sub + .row { margin-top: 4px; }
input[type=radio], input[type=checkbox] { appearance: none; width: 14px; height: 14px; margin: 0; border: 1px solid #808080; border-radius: 50%; background: #efeeec; }
input[type=checkbox] { border-radius: 3px; }
input[type=radio]:checked { border-color: #0f6bff; background: radial-gradient(#0f6bff 3px, #fff 4px); }
input[type=checkbox]:checked { border-color: #0f6bff; background: #0f6bff; display: grid; place-items: center; }
input[type=checkbox]:checked::after { content: ""; width: 8px; height: 4px; border: solid #fff; border-width: 0 0 2px 2px; rotate: -45deg; margin-bottom: 3px; }
input.hover:checked { background: #3f8aff; border-color: #3f8aff; }
.row .spin { margin-left: auto; color: #a3a3a3; }
.spin .num input { width: 61px; background: transparent; border-color: #cfcdcb; padding: 0 9px; }
.field { width: 86px; height: 24px; border: 1px solid #d0cecc; border-bottom-color: #999; border-radius: 4px; background: #fff; padding: 0 9px; }
.field:disabled { background: #e9e8e6; border-color: #cfcdcb; color: #999; }
.end { margin-left: auto; }
.auto { margin-left: auto; width: 86px; }
.row .cast { flex: 1; justify-content: space-between; margin-right: 4px; }
.mark { position: absolute; left: 14px; top: 583px; width: 152px; height: 78px; border: 3px solid #f00; }
.arrow { position: absolute; left: 101px; top: 167px; }

.rail { width: 55px; display: flex; flex-direction: column; align-items: center; padding: 8px 2px 0 0; gap: 8px; flex: none; color: #333; background: #e5e5e2; }
.rail button { width: 32px; height: 32px; justify-content: center; border-radius: 5px; }
.rail .fold { height: 25px; padding-top: 8px; }
.rail .cur { background: #cfcecc; }
.rail .off { color: #a3a3a3; }

/* status bar */
.status { height: 25px; border-top: 1px solid #c9c6c4; display: flex; align-items: center; justify-content: space-between; padding: 0 16px 1px; flex: none; background: linear-gradient(90deg, #e4e4df 0, #e5e5df 16%, #e8e2df 27%, #e7e1e1 40%, #e9e3e0 60%, #e9e4e1 80%, #e4e5df 90%); }
.sright { display: flex; align-items: center; height: 100%; }
.sright i { width: 1px; height: 14px; background: #c5c3c1; }
.aim { gap: 5px; margin: 0 14px 0 19px; }
.view { width: 24px; height: 24px; justify-content: center; background: #cfcccb; border-radius: 4px; margin-left: 9px; }
.page { margin-left: 13px; width: 14px; }
.page + .page { margin: 0 13px 0 18px; }
.zoom { font-size: 13px; gap: 10px; margin-left: 14px; }
.minus { margin: 0 14px 0 17px; }
input[type=range] { appearance: none; width: 112px; height: 16px; margin: 0 9px 0 0; background: linear-gradient(90deg, #2a5be8 56%, #bdbbb9 56%) center / 100% 2px no-repeat; }
input[type=range]::-webkit-slider-thumb { appearance: none; width: 12px; height: 12px; border-radius: 50%; border: 4px solid #fff; background: #888; box-shadow: 0 0 2px #888; }
.full { margin-left: 21px; }

/* site mark over the corner */
.brand { position: absolute; right: 10px; bottom: 8px; display: flex; gap: 1px; z-index: 3; opacity: .9; }
.brand div { display: flex; flex-direction: column; }
.brand strong { font: 700 21px/24px "Noto Sans CJK SC", sans-serif; color: #5b97d2; }
.brand span { font: 700 16px/20px "Liberation Sans", sans-serif; color: #62bd83; }
```
